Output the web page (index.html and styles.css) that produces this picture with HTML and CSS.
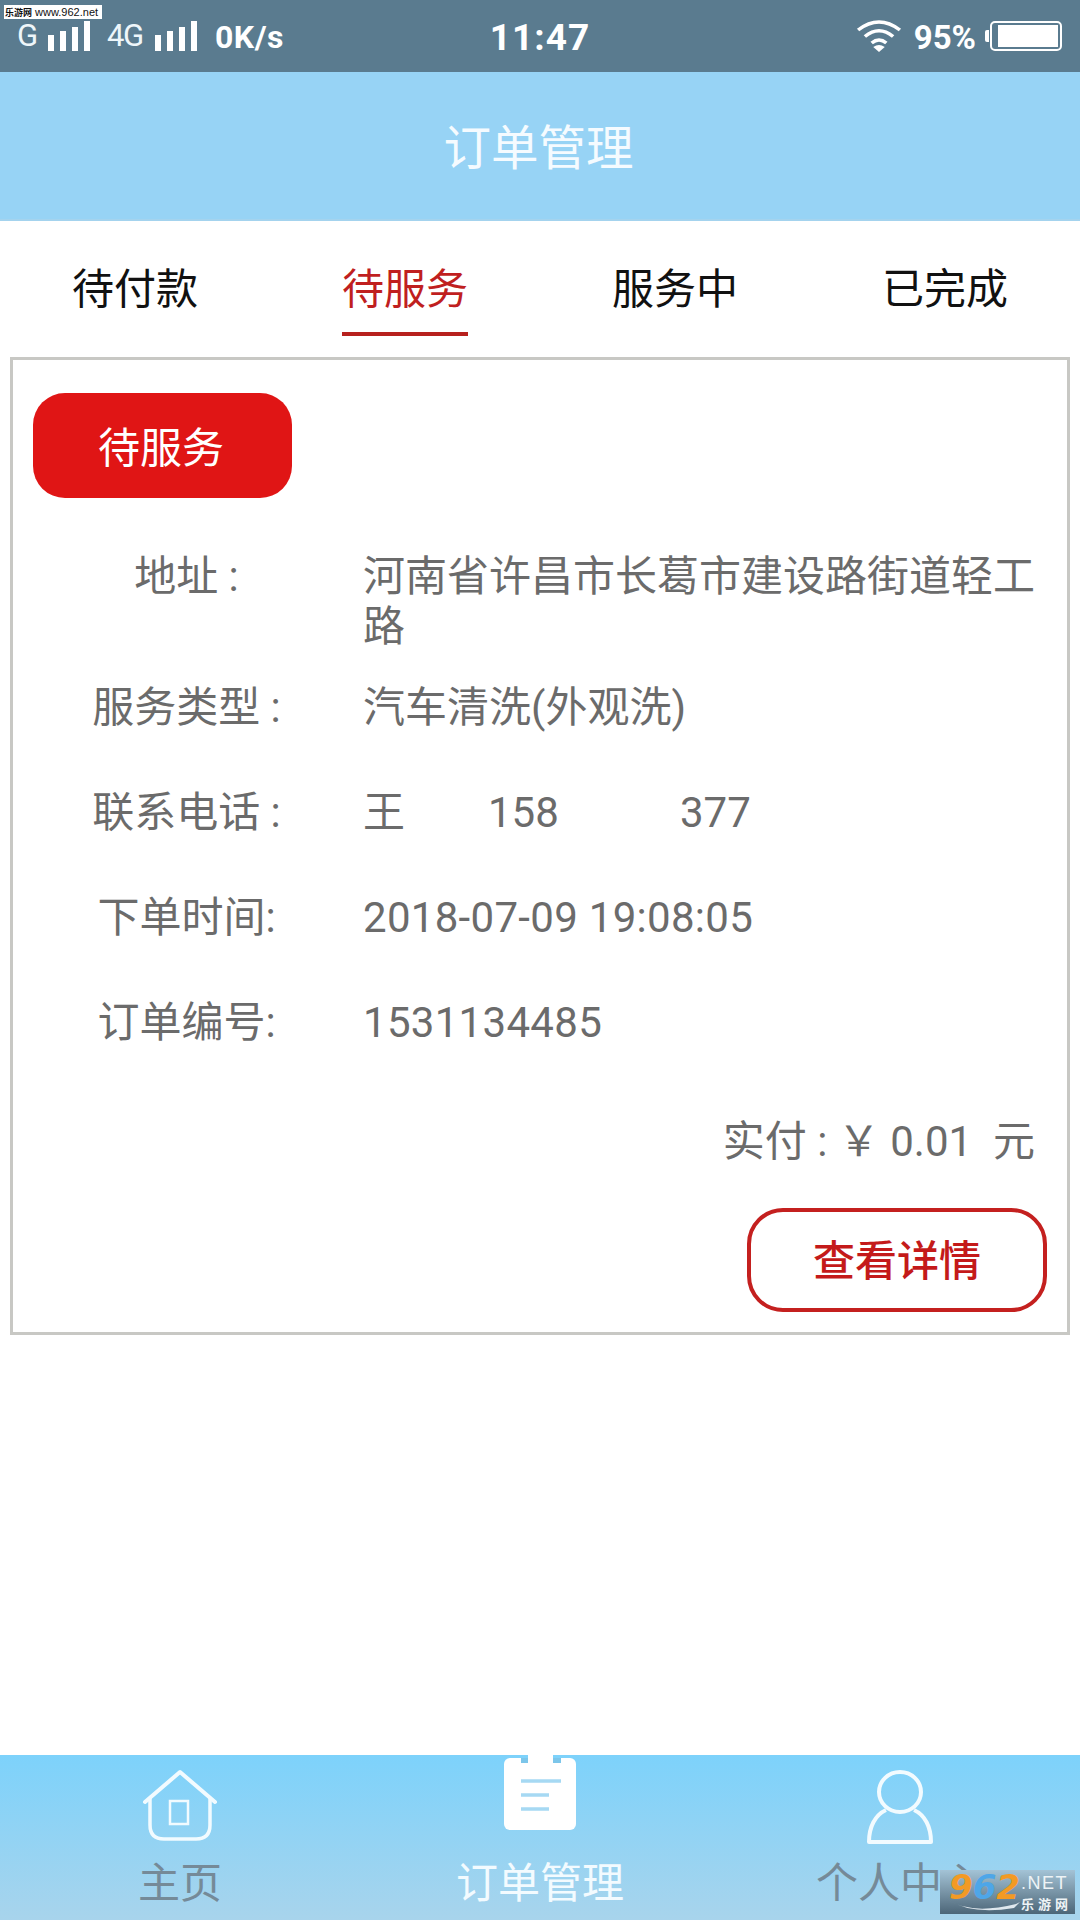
FILE: index.html
```html
<!DOCTYPE html>
<html>
<head>
<meta charset="utf-8">
<title>订单管理</title>
<link rel="stylesheet" href="styles.css">
</head>
<body>

<div id="screen">
    <div class="watermark-top"><span class="wm-cn">乐游网</span> www.962.net</div>

    <div class="status-bar">
        <div class="status-left">
            <span class="net-label">G</span>
            <div class="signal"><i class="b1"></i><i class="b2"></i><i class="b3"></i><i class="b4"></i></div>
            <span class="net-label net-4g">4G</span>
            <div class="signal"><i class="b1"></i><i class="b2"></i><i class="b3"></i><i class="b4"></i></div>
            <span class="speed">0K/s</span>
        </div>
        <div class="status-time">11:47</div>
        <div class="status-right">
            <svg class="wifi" width="46" height="34" viewBox="0 0 44 34" preserveAspectRatio="none">
                <path d="M2 11 Q22 -5 42 11" fill="none" stroke="#fff" stroke-width="3.5"/>
                <path d="M8.5 17.5 Q22 6 35.5 17.5" fill="none" stroke="#fff" stroke-width="3.5"/>
                <path d="M15 24 Q22 18 29 24" fill="none" stroke="#fff" stroke-width="3.5"/>
                <path d="M16.5 28 Q22 24 27.5 28 L22 33 Z" fill="#fff"/>
            </svg>
            <span class="percent">95%</span>
            <div class="battery-tip"></div>
            <div class="battery"><div class="battery-fill"></div></div>
        </div>
    </div>

    <div class="title-bar">订单管理</div>

    <div class="tabs">
        <div class="tab"><span>待付款</span></div>
        <div class="tab active"><span>待服务</span></div>
        <div class="tab"><span>服务中</span></div>
        <div class="tab"><span>已完成</span></div>
    </div>

    <div class="order-card">
        <div class="status-badge">待服务</div>

        <div class="row row-address">
            <div class="row-label">地址 :</div>
            <div class="row-value">河南省许昌市长葛市建设路街道轻工路</div>
        </div>
        <div class="row">
            <div class="row-label">服务类型 :</div>
            <div class="row-value">汽车清洗(外观洗)</div>
        </div>
        <div class="row">
            <div class="row-label">联系电话 :</div>
            <div class="row-value"><span class="contact-name">王</span><span class="contact-start">158</span><span class="contact-end">377</span></div>
        </div>
        <div class="row">
            <div class="row-label">下单时间:</div>
            <div class="row-value num">2018-07-09 19:08:05</div>
        </div>
        <div class="row">
            <div class="row-label">订单编号:</div>
            <div class="row-value num">1531134485</div>
        </div>

        <div class="paid">实付 : ￥ 0.01&nbsp; 元</div>
        <div class="card-actions">
            <div class="detail-btn">查看详情</div>
        </div>
    </div>

    <div class="spacer"></div>

    <div class="bottom-nav">
        <div class="nav-item">
            <svg class="nav-icon" width="76" height="76" viewBox="0 0 76 76">
                <path d="M3 33 L38 3 L73 33" fill="none" stroke="#f2fbff" stroke-width="4" stroke-linecap="round" stroke-linejoin="round"/>
                <path d="M8 29 V56 Q8 70 22 70 H54 Q68 70 68 56 V29" fill="none" stroke="#f2fbff" stroke-width="3.5"/>
                <rect x="28" y="32" width="18" height="23" fill="none" stroke="#f2fbff" stroke-width="2.5"/>
            </svg>
            <div class="nav-label">主页</div>
        </div>
        <div class="nav-item active">
            <svg class="nav-icon icon-order" width="72" height="76" viewBox="0 0 72 76">
                <rect x="0" y="3" width="72" height="72" rx="6" fill="#fff"/>
                <rect x="24" y="0" width="25" height="8" fill="#fff"/>
                <rect x="17" y="3" width="7" height="5" fill="#7cc6ea"/>
                <rect x="49" y="3" width="8" height="5" fill="#7cc6ea"/>
                <path d="M17 26 H57 M17 40 H45 M17 54 H45" stroke="#a6d9f3" stroke-width="3.5"/>
            </svg>
            <div class="nav-label">订单管理</div>
        </div>
        <div class="nav-item">
            <svg class="nav-icon" width="66" height="76" viewBox="0 0 66 76">
                <ellipse cx="33" cy="23" rx="21" ry="20" fill="none" stroke="#f2fbff" stroke-width="4"/>
                <path d="M19 41 C8 46 2 58 2 73 H64 C64 58 58 46 47 41" fill="none" stroke="#f2fbff" stroke-width="4" stroke-linejoin="round"/>
            </svg>
            <div class="nav-label">个人中心</div>
        </div>
    </div>

    <div class="watermark-logo">
        <div class="logo-num"><span class="n-orange">9</span><span class="n-blue">6</span><span class="n-orange">2</span></div>
        <div class="logo-side">
            <div class="logo-net">.NET</div>
            <div class="logo-cn">乐游网</div>
        </div>
        <svg class="logo-swoosh" width="76" height="14" viewBox="0 0 76 14">
            <path d="M2 1 Q26 16 70 5 L74 3 L68 9 Q26 16 2 1 Z" fill="#dfe8ee"/>
        </svg>
    </div>
</div>

</body>
</html>
```

FILE: styles.css
```css
* {
    box-sizing: border-box;
}
body {
    margin: 0;
    background: #fff;
    font-family: Roboto, "Noto Sans CJK SC", sans-serif;
}
#screen {
    position: relative;
    width: 1080px;
    height: 1920px;
    display: flex;
    flex-direction: column;
    overflow: hidden;
}

/* status bar */
.status-bar {
    height: 72px;
    flex-shrink: 0;
    background: #5a7b8f;
    color: #fff;
    display: grid;
    grid-template-columns: 1fr auto 1fr;
    align-items: center;
}
.status-left {
    display: flex;
    align-items: flex-end;
    padding: 0 0 21px 17px;
    height: 72px;
}
.net-label {
    font-size: 31px;
    line-height: 30px;
    width: 31px;
    color: #eef6fa;
}
.net-4g {
    margin-left: 17px;
    width: 48px;
    letter-spacing: -1.5px;
}
.signal {
    display: flex;
    align-items: flex-end;
    gap: 6px;
    height: 30px;
}
.signal i {
    display: block;
    width: 6px;
    background: #fff;
}
.signal .b1 { height: 16px; }
.signal .b2 { height: 20px; }
.signal .b3 { height: 24px; }
.signal .b4 { height: 30px; }
.speed {
    margin-left: 18px;
    margin-bottom: -2px;
    font-size: 32px;
    font-weight: 700;
    line-height: 32px;
    letter-spacing: 0.5px;
}
.status-time {
    font-size: 37px;
    font-weight: 700;
    letter-spacing: 1px;
    padding-top: 3px;
}
.status-right {
    display: flex;
    align-items: center;
    justify-content: flex-end;
    padding-right: 18px;
}
.wifi {
    margin-right: 12px;
}
.percent {
    font-size: 33px;
    font-weight: 700;
    margin-right: 9px;
    padding-top: 2px;
}
.battery-tip {
    width: 4px;
    height: 12px;
    background: #fff;
    border-radius: 2px 0 0 2px;
    margin-right: 1px;
}
.battery {
    width: 72px;
    height: 30px;
    border: 2px solid #fff;
    border-radius: 5px;
    padding: 2px 2px 2px 6px;
}
.battery-fill {
    height: 100%;
    background: #fff;
}

/* title */
.title-bar {
    height: 149px;
    flex-shrink: 0;
    background: #97d3f5;
    border-bottom: 2px solid #a4d3ee;
    color: #f5fbff;
    font-size: 47.5px;
    padding: 0 3px 2px 0;
    display: flex;
    align-items: center;
    justify-content: center;
}

/* tabs */
.tabs {
    height: 136px;
    flex-shrink: 0;
    display: grid;
    grid-template-columns: repeat(4, 1fr);
    text-align: center;
}
.tab {
    font-size: 42px;
    color: #111;
}
.tab span {
    display: inline-block;
    height: 115px;
    padding: 39px 0 0;
    line-height: 60px;
    border-bottom: 4px solid transparent;
}
.tab.active {
    color: #c01f1f;
}
.tab.active span {
    border-bottom-color: #b7211e;
}

/* order card */
.order-card {
    margin: 0 10px;
    height: 978px;
    flex-shrink: 0;
    border: 3px solid #c8c8c4;
    padding: 33px 20px 0 20px;
    color: #6b6b6b;
    font-size: 42px;
}
.status-badge {
    width: 259px;
    height: 105px;
    background: #e01515;
    border-radius: 32px;
    color: #fff;
    font-size: 42px;
    padding: 0 3px 3px 0;
    display: flex;
    align-items: center;
    justify-content: center;
}
.row {
    display: grid;
    grid-template-columns: 330px 1fr;
    height: 105px;
    align-items: center;
    line-height: 50px;
}
.row-label {
    text-align: center;
    padding-right: 23px;
}
.row-value {
    padding-right: 10px;
}
.row-value.num {
    letter-spacing: 0.3px;
}
.row-address {
    margin-top: 29px;
    height: 128px;
    align-items: start;
    padding-top: 25px;
}
.contact-name {
    display: inline-block;
    width: 125px;
}
.contact-start {
    display: inline-block;
    width: 192px;
}
.paid {
    margin-top: 36px;
    height: 62px;
    line-height: 62px;
    text-align: right;
    padding-right: 12px;
}
.card-actions {
    display: flex;
    justify-content: flex-end;
    margin-top: 35px;
}
.detail-btn {
    width: 300px;
    height: 104px;
    border: 4px solid #c4201f;
    border-radius: 36px;
    color: #c41a1a;
    font-size: 42px;
    font-weight: 500;
    padding-bottom: 6px;
    display: flex;
    align-items: center;
    justify-content: center;
}

.spacer {
    flex: 1;
}

/* bottom nav */
.bottom-nav {
    height: 165px;
    flex-shrink: 0;
    background: linear-gradient(#7dd2fb, #a8d4ec);
    display: grid;
    grid-template-columns: repeat(3, 1fr);
    text-align: center;
}
.nav-item {
    display: flex;
    flex-direction: column;
    align-items: center;
    color: #758a98;
    font-size: 42px;
}
.nav-icon {
    display: block;
    margin-top: 14px;
    height: 76px;
}
.icon-order {
    margin-top: 0;
    margin-bottom: 14px;
}
.nav-label {
    margin-top: 9px;
    line-height: 60px;
}
.nav-item.active {
    color: #f3fbff;
}

/* site watermarks */
.watermark-top {
    position: absolute;
    left: 4px;
    top: 5px;
    width: 98px;
    height: 14px;
    background: #fff;
    color: #111;
    font-size: 11px;
    line-height: 14px;
    white-space: nowrap;
    padding-left: 1px;
    font-family: "Liberation Sans", "Noto Sans CJK SC", sans-serif;
}
.wm-cn {
    font-size: 9px;
    font-weight: 700;
}
.watermark-logo {
    position: absolute;
    left: 940px;
    top: 1870px;
    width: 135px;
    height: 44px;
    background: linear-gradient(#a3c3d6, #7d99ab 45%, #4c6678);
    display: flex;
    padding: 1px 4px 0 9px;
    font-family: "DejaVu Sans", "Noto Sans CJK SC", sans-serif;
}
.logo-num {
    font-size: 34px;
    line-height: 32px;
    font-weight: 700;
    font-style: italic;
}
.n-orange {
    color: #f39a24;
}
.n-blue {
    color: #4ea6e8;
}
.logo-side {
    margin-left: 1px;
    color: #eef3f6;
    white-space: nowrap;
}
.logo-net {
    font-size: 18px;
    line-height: 25px;
    letter-spacing: 1.5px;
    font-family: "Liberation Sans", sans-serif;
}
.logo-cn {
    font-size: 13px;
    line-height: 15px;
    letter-spacing: 4px;
    font-weight: 700;
    font-family: "Noto Sans CJK SC", sans-serif;
}
.logo-swoosh {
    position: absolute;
    left: 6px;
    top: 29px;
}
```
